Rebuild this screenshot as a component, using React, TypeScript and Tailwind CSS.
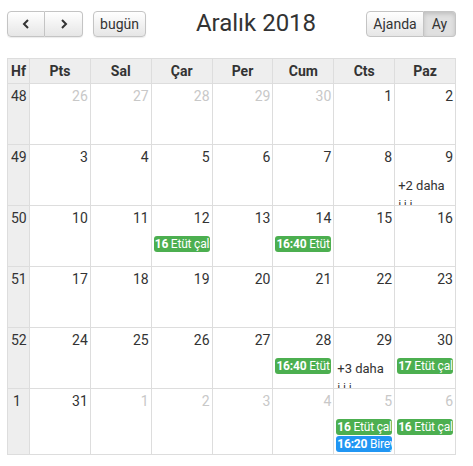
import React from "react";

type Ev = { time: string; title: string; color: "green" | "blue" };
type Day = { n: number; other?: boolean; events?: Ev[]; more?: string };

const weeks: { wk: number; days: Day[] }[] = [
  { wk: 48, days: [{ n: 26, other: true }, { n: 27, other: true }, { n: 28, other: true }, { n: 29, other: true }, { n: 30, other: true }, { n: 1 }, { n: 2 }] },
  { wk: 49, days: [{ n: 3 }, { n: 4 }, { n: 5 }, { n: 6 }, { n: 7 }, { n: 8 }, { n: 9, more: "+2 daha" }] },
  {
    wk: 50,
    days: [
      { n: 10 },
      { n: 11 },
      { n: 12, events: [{ time: "16", title: "Etüt çalışması", color: "green" }] },
      { n: 13 },
      { n: 14, events: [{ time: "16:40", title: "Etüt çalışması", color: "green" }] },
      { n: 15 },
      { n: 16 },
    ],
  },
  { wk: 51, days: [{ n: 17 }, { n: 18 }, { n: 19 }, { n: 20 }, { n: 21 }, { n: 22 }, { n: 23 }] },
  {
    wk: 52,
    days: [
      { n: 24 },
      { n: 25 },
      { n: 26 },
      { n: 27 },
      { n: 28, events: [{ time: "16:40", title: "Etüt çalışması", color: "green" }] },
      { n: 29, more: "+3 daha" },
      { n: 30, events: [{ time: "17", title: "Etüt çalışması", color: "green" }] },
    ],
  },
  {
    wk: 1,
    days: [
      { n: 31 },
      { n: 1, other: true },
      { n: 2, other: true },
      { n: 3, other: true },
      { n: 4, other: true },
      {
        n: 5,
        other: true,
        events: [
          { time: "16", title: "Etüt çalışması", color: "green" },
          { time: "16:20", title: "Bireysel", color: "blue" },
        ],
      },
      { n: 6, other: true, events: [{ time: "16", title: "Etüt çalışması", color: "green" }] },
    ],
  },
];

const heads = ["Pts", "Sal", "Çar", "Per", "Cum", "Cts", "Paz"];

function Chevron({ dir }: { dir: "l" | "r" }) {
  return (
    <svg width="8" height="10" viewBox="0 0 8 10" className="block">
      <path
        d={dir === "l" ? "M6 1 L2 5 L6 9" : "M2 1 L6 5 L2 9"}
        fill="none"
        stroke="#333"
        strokeWidth="2"
      />
    </svg>
  );
}

const btn =
  "h-[26px] flex items-center justify-center border border-[#c4c4c4] bg-gradient-to-b from-[#ffffff] to-[#e6e6e6] text-[#333] text-[14px]";

export default function App() {
  return (
    <div
      className="w-[473px] h-[466px] bg-white text-[#333] pl-[7px] pt-[11px]"
      style={{ fontFamily: "Roboto, 'Liberation Sans', Arial, sans-serif" }}
    >
      <div className="w-[449px] flex items-center justify-between h-[26px]">
        <div className="flex items-center">
          <div className="flex shadow-[0_1px_1px_rgba(0,0,0,0.08)] rounded-[4px]">
            <div className={btn + " w-[38px] rounded-l-[4px]"}>
              <Chevron dir="l" />
            </div>
            <div className={btn + " w-[38px] rounded-r-[4px] border-l-0"}>
              <Chevron dir="r" />
            </div>
          </div>
          <div className={btn + " ml-[10px] w-[53px] rounded-[4px] shadow-[0_1px_1px_rgba(0,0,0,0.08)]"}>bugün</div>
        </div>
        <div className="text-[24px] leading-[28px] text-[#333] mt-[-2px]">Aralık 2018</div>
        <div className="flex">
          <div className={btn + " w-[58px] rounded-l-[4px]"}>Ajanda</div>
          <div className="h-[26px] w-[32px] flex items-center justify-center border border-l-0 border-[#c4c4c4] rounded-r-[4px] bg-[#e0e0e0] text-[#333] text-[14px] shadow-[inset_0_2px_4px_rgba(0,0,0,0.15)]">
            Ay
          </div>
        </div>
      </div>

      <div className="mt-[21px] w-[449px] border-l border-t border-[#ddd] grid grid-cols-[22px_repeat(7,1fr)]">
        <div className="h-[25px] border-r border-b border-[#ddd] bg-[#eee] font-bold text-[14px] leading-[24px] pl-[3px]">Hf</div>
        {heads.map((h) => (
          <div key={h} className="h-[25px] border-r border-b border-[#ddd] bg-[#eee] font-bold text-[14px] leading-[24px] text-center">
            {h}
          </div>
        ))}
        {weeks.map((w, wi) => {
          const h = wi === 5 ? "h-[66px]" : "h-[61px]";
          return (
            <React.Fragment key={w.wk}>
              <div className={h + " border-r border-b border-[#ddd] bg-[#eee] text-[14px] leading-[20px] pt-[2px] pl-[3px]"}>
                {w.wk === 1 ? <span className="pl-[2px]">1</span> : w.wk}
              </div>
              {w.days.map((d, di) => (
                <div key={di} className={h + " border-r border-b border-[#ddd] overflow-hidden flex flex-col"}>
                  <div className={"text-right text-[14px] leading-[20px] pt-[2px] pr-[2px] " + (d.other ? "text-[#c8c8c8]" : "text-[#333]")}>
                    {d.n}
                  </div>
                  {d.events && (
                    <div className="mt-[8px] flex flex-col gap-[1px] px-[2px]">
                      {d.events.map((e, ei) => (
                        <div
                          key={ei}
                          className={
                            "h-[16px] rounded-[3px] overflow-hidden whitespace-nowrap text-white text-[12px] leading-[16px] pl-[1px] tracking-[-0.2px] " +
                            (e.color === "green" ? "bg-[#4caf50]" : "bg-[#2196f3]")
                          }
                        >
                          <span className="font-bold">{e.time}</span> {e.title}
                        </div>
                      ))}
                    </div>
                  )}
                  {d.more && (
                    <div className="mt-[10px] pl-[3px] text-[13px] leading-[18px] text-[#333] whitespace-nowrap">
                      <div>{d.more}</div>
                      <div className="mt-[3px] text-[11px]">İ  İ    İ</div>
                    </div>
                  )}
                </div>
              ))}
            </React.Fragment>
          );
        })}
      </div>
    </div>
  );
}
